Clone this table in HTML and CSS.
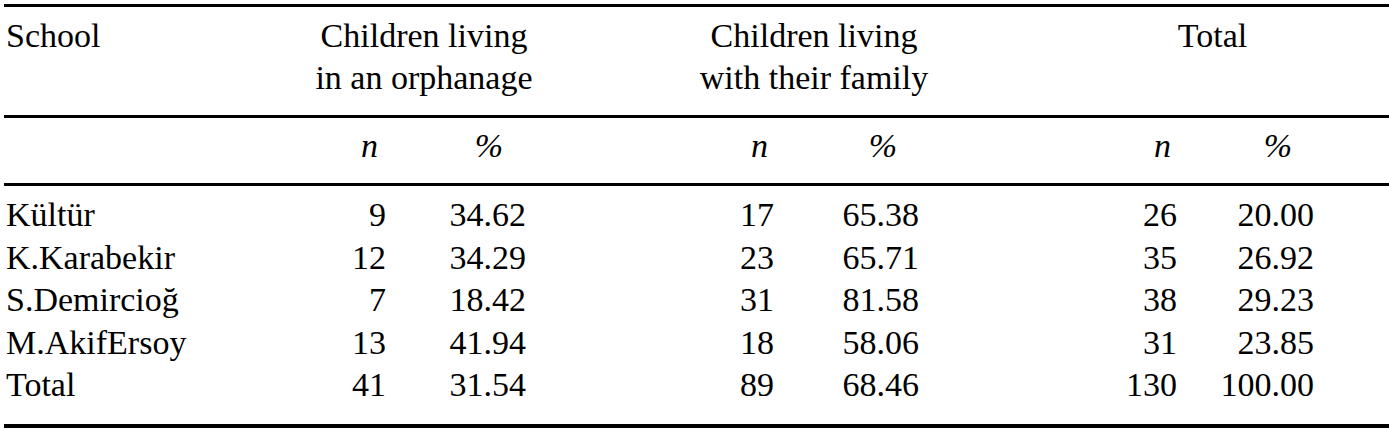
FILE: index.html
```html
<!DOCTYPE html>
<html lang="en">
<head>
<meta charset="utf-8">
<title>Children by school</title>
<link rel="stylesheet" href="styles.css">
</head>
<body>
<div class="table">
  <div class="rule top"></div>
  <div class="grid head">
    <div class="school">School</div>
    <div class="group g1">Children living<br>in an orphanage</div>
    <div class="group g2">Children living<br>with their family</div>
    <div class="group g3">Total</div>
  </div>
  <div class="rule"></div>
  <div class="grid sub">
    <div class="n1 hn">n</div>
    <div class="p1 hp">%</div>
    <div class="n2 hn">n</div>
    <div class="p2 hp">%</div>
    <div class="n3 hn">n</div>
    <div class="p3 hp">%</div>
  </div>
  <div class="rule"></div>
  <div class="grid body">
    <div class="school">Kültür</div><div class="n1">9</div><div class="p1">34.62</div><div class="n2">17</div><div class="p2">65.38</div><div class="n3">26</div><div class="p3">20.00</div>
    <div class="school">K.Karabekir</div><div class="n1">12</div><div class="p1">34.29</div><div class="n2">23</div><div class="p2">65.71</div><div class="n3">35</div><div class="p3">26.92</div>
    <div class="school">S.Demircioğ</div><div class="n1">7</div><div class="p1">18.42</div><div class="n2">31</div><div class="p2">81.58</div><div class="n3">38</div><div class="p3">29.23</div>
    <div class="school">M.AkifErsoy</div><div class="n1">13</div><div class="p1">41.94</div><div class="n2">18</div><div class="p2">58.06</div><div class="n3">31</div><div class="p3">23.85</div>
    <div class="school">Total</div><div class="n1">41</div><div class="p1">31.54</div><div class="n2">89</div><div class="p2">68.46</div><div class="n3">130</div><div class="p3">100.00</div>
  </div>
  <div class="rule bottom"></div>
</div>
</body>
</html>
```
FILE: styles.css
```css
html, body {
  margin: 0;
  padding: 0;
  background: #ffffff;
}

body {
  padding: 4px 0 0 4px;
  font-family: "Liberation Serif", "Times New Roman", serif;
  font-size: 34px;
  color: #000000;
}

.table {
  width: 1385px;
}

.rule {
  height: 3px;
  background: #000000;
}

.rule.bottom {
  height: 4px;
}

.grid {
  display: grid;
  grid-template-columns: 296px 120px 128px 142px 120px 128px 162px 114px 111px 64px;
}

.head {
  line-height: 42px;
  padding: 8px 0 16px;
}

.sub {
  line-height: 42px;
  padding: 7px 0 16px;
}

.body {
  line-height: 42.5px;
  padding: 8px 0 17.5px;
}

.school {
  grid-column: 1;
  padding-left: 2px;
}

.group {
  text-align: center;
  grid-row: 1;
}

.g1 { grid-column: 2 / 4; }
.g2 { grid-column: 5 / 7; }
.g3 { grid-column: 8 / 10; }

.n1, .p1, .n2, .p2, .n3, .p3 {
  text-align: right;
}

.n1 { grid-column: 2; padding-right: 34px; }
.p1 { grid-column: 3; padding-right: 22px; }
.n2 { grid-column: 5; padding-right: 36px; }
.p2 { grid-column: 6; padding-right: 19px; }
.n3 { grid-column: 8; padding-right: 37px; }
.p3 { grid-column: 9; padding-right: 11px; }

.hn, .hp {
  font-style: italic;
}

.n1.hn { padding-right: 42px; }
.p1.hp { padding-right: 45px; }
.n2.hn { padding-right: 42px; }
.p2.hp { padding-right: 41px; }
.n3.hn { padding-right: 43px; }
.p3.hp { padding-right: 33px; }
```
